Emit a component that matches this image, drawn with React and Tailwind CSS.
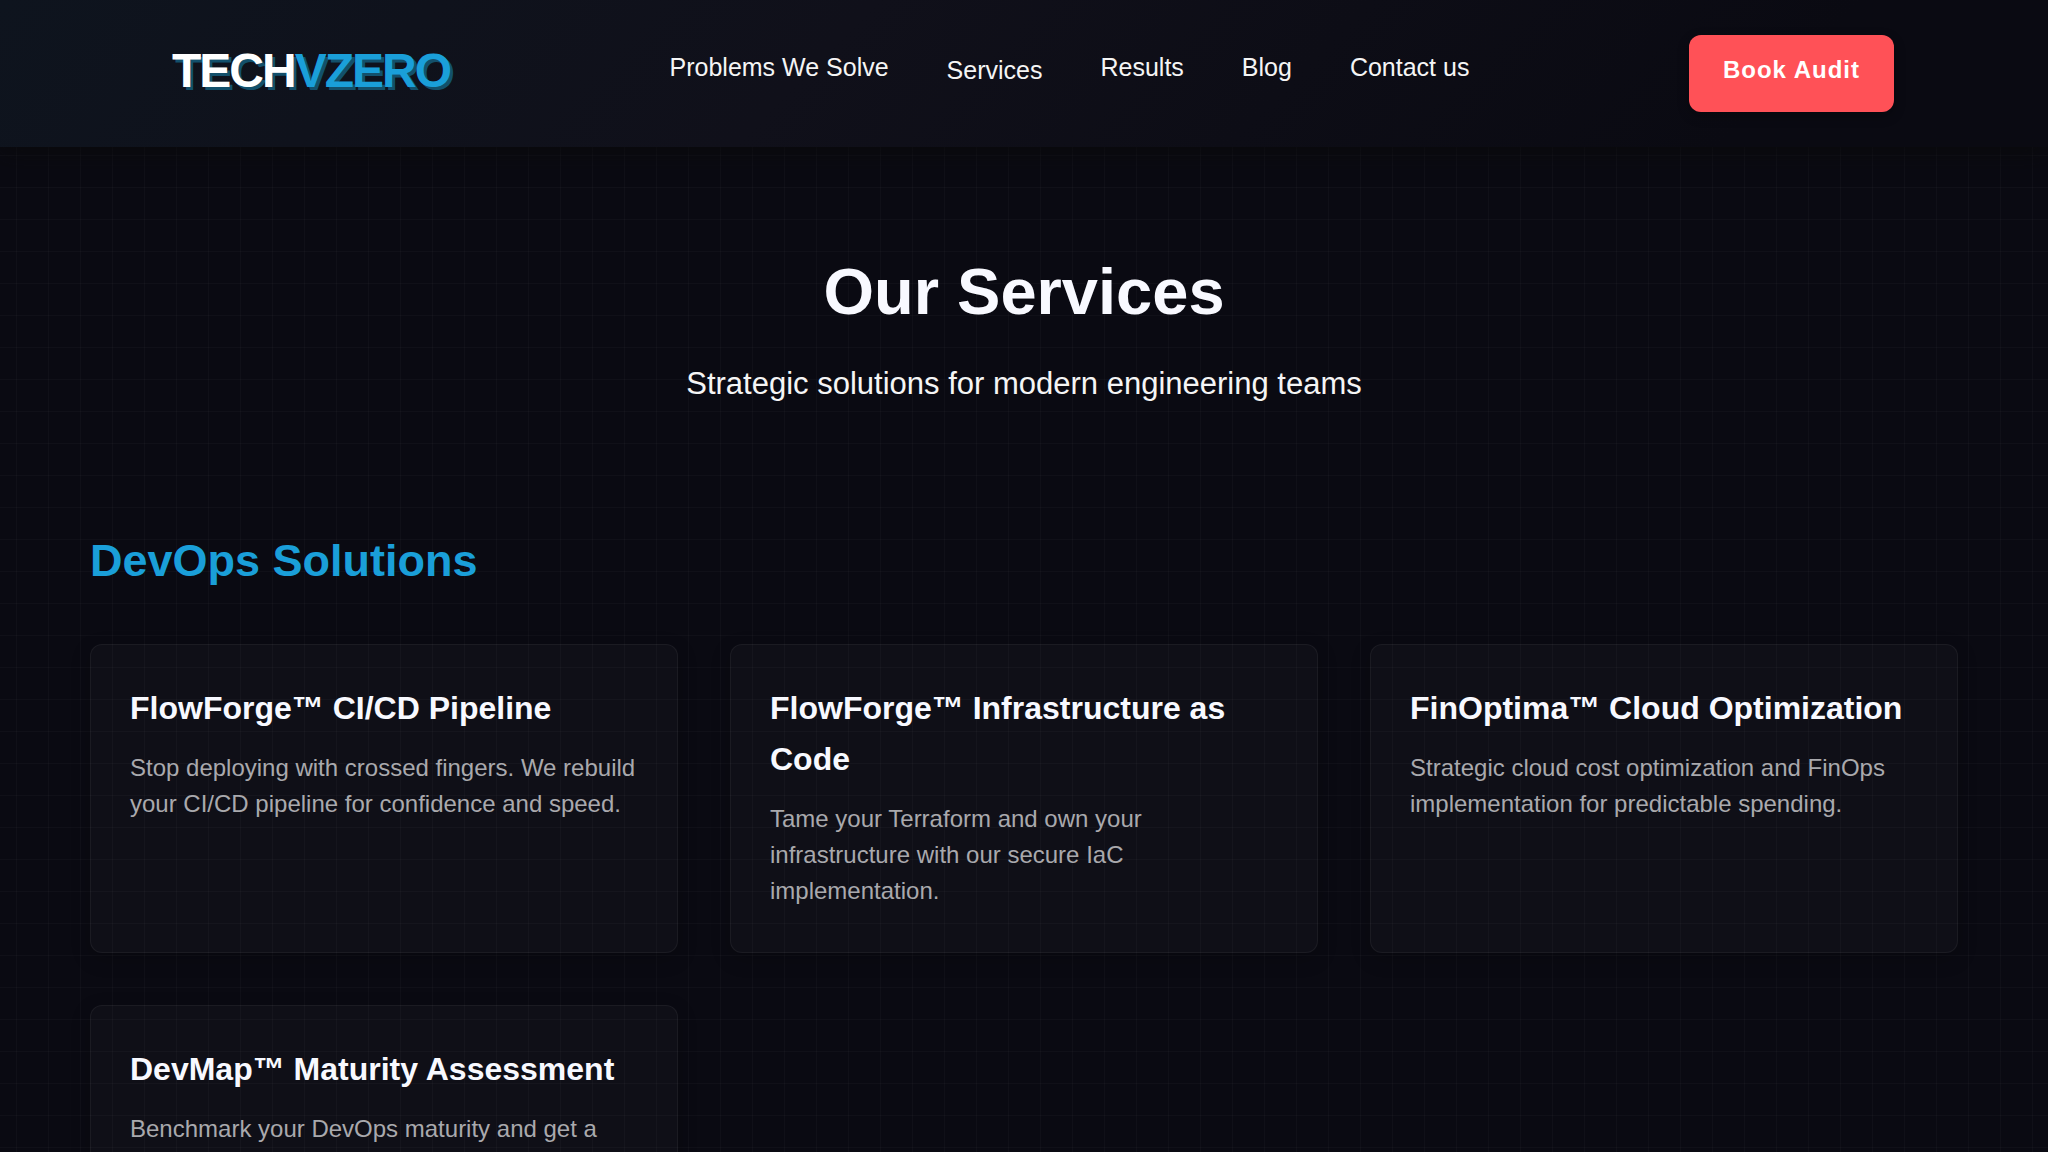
import React from "react";

const navLinks = [
  { label: "Problems We Solve", href: "#problems" },
  { label: "Services", href: "#services", active: true },
  { label: "Results", href: "#results" },
  { label: "Blog", href: "#blog" },
  { label: "Contact us", href: "#contact" },
];

const devopsServices = [
  {
    title: "FlowForge™ CI/CD Pipeline",
    text: "Stop deploying with crossed fingers. We rebuild your CI/CD pipeline for confidence and speed.",
  },
  {
    title: "FlowForge™ Infrastructure as Code",
    text: "Tame your Terraform and own your infrastructure with our secure IaC implementation.",
  },
  {
    title: "FinOptima™ Cloud Optimization",
    text: "Strategic cloud cost optimization and FinOps implementation for predictable spending.",
  },
  {
    title: "DevMap™ Maturity Assessment",
    text: "Benchmark your DevOps maturity and get a",
  },
];

const Navbar = () => {
  return (
    <header className="relative z-10 bg-[linear-gradient(135deg,#0e141e_0%,#10101a_40%,#0a0a12_85%)] shadow-[0_4px_24px_rgba(10,10,10,0.8)]">
      <nav className="flex items-center justify-between pl-[172px] pr-[154px] h-[147px]">
        <a
          href="#home"
          className="text-[48px] leading-[60px] pb-1.5 font-bold text-white tracking-[-2px] [text-shadow:3px_3px_0_#13506b]"
        >
          TECH<span className="text-[#1a9fd9]">VZERO</span>
        </a>
        <ul className="flex items-center gap-[58px] pb-3">
          {navLinks.map((link) => (
            <li key={link.label} className={link.active ? "pt-1.5" : ""}>
              <a href={link.href} className="text-[25px] text-[#f5f5f5]">
                {link.label}
              </a>
            </li>
          ))}
        </ul>
        <button
          type="button"
          className="h-[77px] px-[34px] pb-2 rounded-xl bg-[#ff5157] text-white text-[24px] font-bold tracking-[1px] shadow-[0_4px_12px_rgba(0,0,0,0.3)]"
        >
          Book Audit
        </button>
      </nav>
    </header>
  );
};

const ServiceCard = ({ title, text }) => {
  return (
    <article className="px-[39px] pt-[38px] pb-[43px] rounded-xl border border-white/5 bg-white/[0.025] shadow-[0_6px_20px_rgba(0,0,0,0.2)]">
      <h3 className="mb-4 text-[32px] leading-[51px] font-bold text-[#f8f9ff]">
        {title}
      </h3>
      <p className="text-[24px] leading-[36px] text-[#a9a9ad]">{text}</p>
    </article>
  );
};

const App = () => {
  return (
    <div className="h-screen overflow-hidden bg-[#0a0a12] font-['Liberation_Sans',Arial,sans-serif]">
      <Navbar />
      {/* grid lines behind the content */}
      <main className="min-h-screen px-[90px] bg-[linear-gradient(rgba(255,255,255,0.025)_1px,transparent_1px),linear-gradient(90deg,rgba(255,255,255,0.025)_1px,transparent_1px)] bg-[length:32px_32px] bg-[position:16px_8px]">
        <section className="pt-[105px] pb-[112px] text-center">
          <h1 className="text-[65px] leading-[80px] font-bold text-[#f8f9ff]">
            Our Services
          </h1>
          <p className="mt-6 text-[31px] leading-[56px] text-[#f5f5f5]">
            Strategic solutions for modern engineering teams
          </p>
        </section>
        <section>
          <h2 className="mb-[46px] text-[45px] leading-[74px] font-bold text-[#1a9fd9]">
            DevOps Solutions
          </h2>
          <div className="grid grid-cols-3 gap-[52px]">
            {devopsServices.map((service) => (
              <ServiceCard
                key={service.title}
                title={service.title}
                text={service.text}
              />
            ))}
          </div>
        </section>
      </main>
    </div>
  );
};

export default App;
